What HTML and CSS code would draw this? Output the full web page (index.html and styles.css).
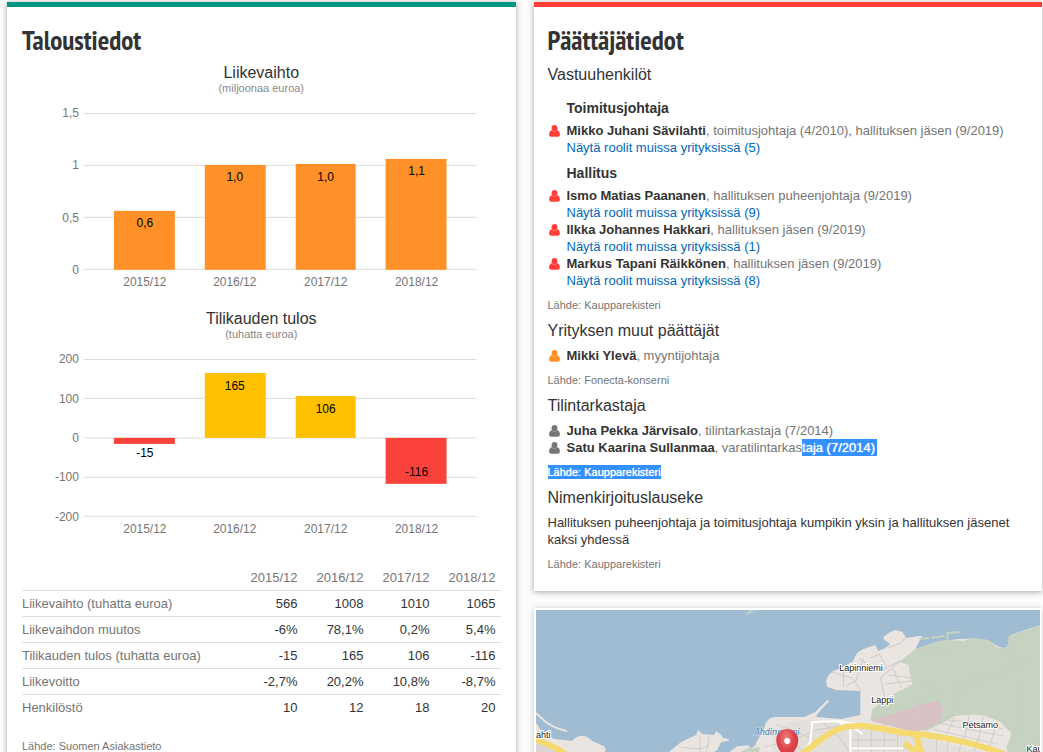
FILE: index.html
```html
<!DOCTYPE html>
<html lang="fi">
<head>
  <meta charset="UTF-8">
  <meta name="viewport" content="width=device-width, initial-scale=1">
  <title>Taloustiedot ja päättäjät</title>
  <link rel="stylesheet" href="styles.css">
</head>
<body>
  <svg class="symbols" aria-hidden="true">
    <symbol id="user" viewBox="0 0 11 12">
      <ellipse cx="5.5" cy="3.2" rx="2.9" ry="3.2"/>
      <path d="M2.6 5.3C0.9 5.7 0.1 7.2 0.1 9.6C0.1 10.9 0.9 11.7 2.1 11.7H8.9C10.1 11.7 10.9 10.9 10.9 9.6C10.9 7.2 10.1 5.7 8.4 5.3C7.5 6.2 6.5 6.6 5.5 6.6C4.5 6.6 3.5 6.2 2.6 5.3Z"/>
    </symbol>
  </svg>

  <main class="columns">
    <section class="card card-finance">
      <h2>Taloustiedot</h2>

      <div class="chart">
        <h3 class="chart-title">Liikevaihto</h3>
        <p class="chart-unit">(miljoonaa euroa)</p>
        <svg viewBox="0 0 479 196" role="img" aria-label="Liikevaihto">
          <path class="grid" d="M62 19.5H455M62 71.5H455M62 123.5H455M62 175.5H455"/>
          <g class="axis">
            <text x="57" y="23">1,5</text>
            <text x="57" y="75">1</text>
            <text x="57" y="128">0,5</text>
            <text x="57" y="180">0</text>
          </g>
          <g class="bars-revenue">
            <rect x="92" y="117" width="61" height="59"/>
            <rect x="183" y="71" width="61" height="105"/>
            <rect x="274" y="70" width="60" height="106"/>
            <rect x="364" y="65" width="61" height="111"/>
          </g>
          <g class="values">
            <text x="123" y="133">0,6</text>
            <text x="213" y="87">1,0</text>
            <text x="304" y="87">1,0</text>
            <text x="395" y="81">1,1</text>
          </g>
          <g class="years">
            <text x="123" y="192">2015/12</text>
            <text x="213" y="192">2016/12</text>
            <text x="304" y="192">2017/12</text>
            <text x="395" y="192">2018/12</text>
          </g>
        </svg>
      </div>

      <div class="chart">
        <h3 class="chart-title">Tilikauden tulos</h3>
        <p class="chart-unit">(tuhatta euroa)</p>
        <svg viewBox="0 0 479 205" role="img" aria-label="Tilikauden tulos">
          <path class="grid" d="M62 19.5H455M62 58.5H455M62 98H455M62 137.5H455M62 176.5H455"/>
          <g class="axis">
            <text x="57" y="23">200</text>
            <text x="57" y="63">100</text>
            <text x="57" y="102">0</text>
            <text x="57" y="141">-100</text>
            <text x="57" y="181">-200</text>
          </g>
          <g class="bars-profit">
            <rect x="183" y="33" width="61" height="65"/>
            <rect x="274" y="56" width="60" height="42"/>
          </g>
          <g class="bars-loss">
            <rect x="92" y="98" width="61" height="6"/>
            <rect x="364" y="98" width="61" height="46"/>
          </g>
          <g class="values">
            <text x="123" y="117">-15</text>
            <text x="213" y="50">165</text>
            <text x="304" y="73">106</text>
            <text x="395" y="136">-116</text>
          </g>
          <g class="years">
            <text x="123" y="193">2015/12</text>
            <text x="213" y="193">2016/12</text>
            <text x="304" y="193">2017/12</text>
            <text x="395" y="193">2018/12</text>
          </g>
        </svg>
      </div>

      <table class="figures">
        <thead>
          <tr><td></td><th scope="col">2015/12</th><th scope="col">2016/12</th><th scope="col">2017/12</th><th scope="col">2018/12</th></tr>
        </thead>
        <tbody>
          <tr><th scope="row">Liikevaihto (tuhatta euroa)</th><td>566</td><td>1008</td><td>1010</td><td>1065</td></tr>
          <tr><th scope="row">Liikevaihdon muutos</th><td>-6%</td><td>78,1%</td><td>0,2%</td><td>5,4%</td></tr>
          <tr><th scope="row">Tilikauden tulos (tuhatta euroa)</th><td>-15</td><td>165</td><td>106</td><td>-116</td></tr>
          <tr><th scope="row">Liikevoitto</th><td>-2,7%</td><td>20,2%</td><td>10,8%</td><td>-8,7%</td></tr>
          <tr><th scope="row">Henkilöstö</th><td>10</td><td>12</td><td>18</td><td>20</td></tr>
        </tbody>
      </table>
      <p class="source source-table">Lähde: Suomen Asiakastieto</p>
    </section>

    <div class="side">
      <section class="card card-people">
        <h2>Päättäjätiedot</h2>

        <h3>Vastuuhenkilöt</h3>
        <div class="roles">
          <h4>Toimitusjohtaja</h4>
          <ul class="people red">
            <li><svg class="icon"><use href="#user"/></svg><div><strong>Mikko Juhani Sävilahti</strong>, toimitusjohtaja (4/2010), hallituksen jäsen (9/2019)<br><a href="#">Näytä roolit muissa yrityksissä (5)</a></div></li>
          </ul>
          <h4>Hallitus</h4>
          <ul class="people red">
            <li><svg class="icon"><use href="#user"/></svg><div><strong>Ismo Matias Paananen</strong>, hallituksen puheenjohtaja (9/2019)<br><a href="#">Näytä roolit muissa yrityksissä (9)</a></div></li>
            <li><svg class="icon"><use href="#user"/></svg><div><strong>Ilkka Johannes Hakkari</strong>, hallituksen jäsen (9/2019)<br><a href="#">Näytä roolit muissa yrityksissä (1)</a></div></li>
            <li><svg class="icon"><use href="#user"/></svg><div><strong>Markus Tapani Räikkönen</strong>, hallituksen jäsen (9/2019)<br><a href="#">Näytä roolit muissa yrityksissä (8)</a></div></li>
          </ul>
        </div>
        <p class="source">Lähde: Kaupparekisteri</p>

        <h3>Yrityksen muut päättäjät</h3>
        <ul class="people orange">
          <li><svg class="icon"><use href="#user"/></svg><div><strong>Mikki Ylevä</strong>, myyntijohtaja</div></li>
        </ul>
        <p class="source">Lähde: Fonecta-konserni</p>

        <h3>Tilintarkastaja</h3>
        <ul class="people gray">
          <li><svg class="icon"><use href="#user"/></svg><div><strong>Juha Pekka Järvisalo</strong>, tilintarkastaja (7/2014)</div></li>
          <li><svg class="icon"><use href="#user"/></svg><div><strong>Satu Kaarina Sullanmaa</strong>, varatilintarkas<span class="selected selected-end">taja (7/2014)</span></div></li>
        </ul>
        <p class="source"><span class="selected">Lähde: Kaupparekisteri</span></p>

        <h3>Nimenkirjoituslauseke</h3>
        <p class="clause">Hallituksen puheenjohtaja ja toimitusjohtaja kumpikin yksin ja hallituksen jäsenet kaksi yhdessä</p>
        <p class="source">Lähde: Kaupparekisteri</p>
      </section>

      <section class="map">
        <svg viewBox="0 0 504 200" role="img" aria-label="Kartta">
          <defs>
            <radialGradient id="pin" cx="0.45" cy="0.25" r="0.7">
              <stop offset="0" stop-color="#f08080"/>
              <stop offset="0.5" stop-color="#dd4449"/>
              <stop offset="1" stop-color="#cf3338"/>
            </radialGradient>
          </defs>
          <rect width="504" height="200" fill="#a0bcd2"/>
          <path d="M209 5L214 0H217L213 4ZM216 3L219 0L220 1Z" fill="#c6d6c6"/>

          <!-- western shore -->
          <path d="M0 103C8 110 13 117 31 121" fill="none" stroke="#eae5e1" stroke-width="2"/>
          <path d="M0 113L6 122L18 129L36 131C42 124 50 124 56 131L68 136Q71 139 68 143L72 152V200H0Z" fill="#eae5e1"/>
          <path d="M0 128L10 133L38 145V200H0Z" fill="#d9d6d3"/>
          <path d="M0 129L20 138L42 152" fill="none" stroke="#f5d96d" stroke-width="6"/>

          <!-- southern shore and the peninsula -->
          <path d="M130 144L145 132L160 125L162 120L166 124L178 125L180 121L185 125L187 128L193 129L192 131L185 132L181 140L174 143L190 152V200H120V150Z" fill="#eae5e1"/>
          <path d="M190 144L201 136L212 135L215 138L219 135L222 129L228 118Q230 108 238 107L268 107L279 102L291 90L293 91L281 104L280 107L305 109L324 105V81L300 80L291 77Q287 68 297 61L307 57L317 51Q319 41 330 38L339 35L342 41L349 38L354 34L348 30L347 27L354 22L359 20L366 22L370 28L382 26L386 26L382 33L379 39C392 34 412 27 444 29C455 29 461 39 470 38C475 34 469 27 477 24L492 19L504 15V200H180Z" fill="#eae5e1"/>
          <path d="M379 39L402 31L412 30L428 31L434 28C448 29 451 29 457 33L461 39L470 37L473 31L471 27L481 23L491 20L504 15V200H486L470 137L475 124L464 112C447 104 430 103 418 107L390 121L334 110L336 99L359 83L376 75L372 55L363 52Z" fill="#c6d3c1"/>
          <path d="M411 30V23M410 23L424 22M395 28L408 26M383 29L393 28" fill="none" stroke="#c6d3c1" stroke-width="2"/>
          <path d="M334 111L358 103L373 99L382 94L402 91L407 99L404 111L390 119L378 122Z" fill="#d8c1c5"/>
          <path d="M203 143L211 138L224 137L222 144Z" fill="#c6d3c1"/>
          <path d="M418 106L447 105L462 112L475 123L466 135L450 143V200H370V136Z" fill="#eae5e1"/>
          <path d="M239 124L251 112L272 110L300 113L330 117L395 130L460 145V200H224Z" fill="#e3dfdb"/>
          <path d="M502 132L504 130V138H502Z" fill="#d8c1c5"/>

          <!-- paths and minor streets -->
          <g class="minor">
            <path d="M379 38L400 43L418 37M422 96C421 80 430 69 456 66L472 57L491 49M461 37L474 46V57M434 69L446 76M422 82L416 70V67M370 76L392 75Q402 79 404 90M364 51L343 61L323 49M334 48L343 44L350 56M364 51L344 68L348 86M353 65L376 68M357 59L365 78M349 74L375 71M295 62L316 68L324 80M307 58V77M327 48L320 70L310 76M352 38L364 33L369 28M482 77L485 102L480 126L475 133M418 107L410 124M433 104L427 133M447 105L440 138M461 112L452 139M402 113L440 121L468 126M396 119L435 128L462 134M410 110L445 113L467 119M379 117L384 99M346 116L365 111L384 105"/>
            <path d="M164 125V145M173 126L170 145M145 137L164 139L173 135M133 145L155 144M239 114L254 119L280 131M244 123L269 142M228 137L263 127L282 119M286 112L305 129L314 143M280 120L303 116M322 122V144M335 119V144M348 121V145M361 124V143M313 130H360M320 137H377M400 129V144M412 132L410 145M425 130L422 145M440 131L437 145"/>
          </g>

          <!-- white streets -->
          <path d="M274 134L276 112L302 111L314 113L335 116L370 124M275 137L256 155M314 112V200M312 113L326 124M314 138H367M274 132L265 145M302 111L311 118L322 117" fill="none" stroke="#fff" stroke-width="2"/>

          <!-- main roads -->
          <g fill="none" stroke="#f5da70" stroke-width="6">
            <path d="M257 151C280 133 292 122 305 118C327 111 349 121 371 123C404 126 437 132 470 145L498 156"/>
            <path d="M379 122L383 137L390 155M368 133L389 149"/>
          </g>

          <g class="place">
            <text x="303" y="61">Lapinniemi</text>
            <text x="335" y="93">Lappi</text>
            <text x="426" y="118">Petsamo</text>
            <text x="490" y="142">Kau</text>
            <text x="0" y="128">ahti</text>
          </g>
          <text class="water" x="218" y="125">Ahdinnonni</text>

          <path d="M251 154C249 145 240 140 240 130A10.5 10.5 0 0 1 262 130C262 140 253 145 251 154Z" fill="url(#pin)"/>
          <circle cx="251" cy="131" r="3" fill="#fff"/>
        </svg>
      </section>
    </div>
  </main>
</body>
</html>
```
FILE: styles.css
```css
* {
  box-sizing: border-box;
}

body {
  margin: 0;
  background: #fcfcfc;
  color: #333;
  font-family: Arial, "Liberation Sans", sans-serif;
  font-size: 13px;
  line-height: 17px;
}

h2, h3, h4, p, ul {
  margin: 0;
  padding: 0;
}

.symbols {
  display: none;
}

.columns {
  display: grid;
  grid-template-columns: 1fr 1fr;
  gap: 18px;
  padding: 2px 1px 18px 7px;
}

.side {
  display: flex;
  flex-direction: column;
  gap: 17px;
}

.card {
  padding: 15px 15px 18px 14px;
  background: #fff;
  border-top: 5px solid;
  box-shadow: 0 1px 6px rgba(0, 0, 0, 0.35);
}

.card-finance {
  padding-left: 15px;
  border-color: #009681;
}

.card-people {
  border-color: #ff3f38;
}

h2 {
  font-family: "PT Sans Narrow", "Liberation Sans Narrow", "Open Sans", sans-serif;
  font-size: 27px;
  line-height: 36px;
  font-weight: bold;
}

h3 {
  margin: 6px 0 5px;
  font-size: 16px;
  line-height: 22px;
  font-weight: normal;
}

h4 {
  margin: 8px 0 5px 19px;
  font-size: 14px;
  line-height: 18px;
}

.roles h4:first-child {
  margin-top: 0;
  padding-top: 8px;
}

/* charts */
.chart {
  padding-top: 4px;
}

.chart + .chart {
  padding-top: 18px;
}

.chart-title,
.chart-unit {
  margin: 0;
  line-height: 21px;
  text-align: center;
}

.chart-unit {
  color: #888;
  font-size: 11px;
  line-height: 11px;
}

.chart svg {
  display: block;
  width: 100%;
}

.chart text {
  font-size: 12px;
}

.grid {
  stroke: #ddd;
}

.axis,
.years {
  fill: #757575;
}

.axis {
  text-anchor: end;
}

.values,
.years {
  text-anchor: middle;
}

.values {
  fill: #000;
}

.bars-revenue {
  fill: #ff9128;
}

.bars-profit {
  fill: #ffc000;
}

.bars-loss {
  fill: #fb423a;
}

/* key figures */
.figures {
  width: 100%;
  margin-top: 20px;
  border-collapse: collapse;
  table-layout: fixed;
}

.figures th,
.figures td {
  width: 66px;
  height: 26px;
  padding: 0 5px 0 0;
  text-align: right;
  font-weight: normal;
}

.figures th {
  color: #757575;
}

.figures th[scope="row"],
.figures thead td {
  width: auto;
  text-align: left;
}

.figures tbody tr {
  border-top: 1px solid #ddd;
}

/* people */
.people {
  color: #757575;
  list-style: none;
}

.people li {
  display: flex;
  gap: 7px;
}

.people li > div {
  flex: 1;
}

.people strong {
  color: #333;
}

.people a {
  color: #0067b9;
  text-decoration: none;
}

.icon {
  flex: none;
  width: 11px;
  height: 12px;
  margin: 3px 0 0 1px;
}

.red .icon {
  fill: #ff3f38;
}

.orange .icon {
  fill: #ff9128;
}

.gray .icon {
  fill: #757575;
}

.source {
  margin-top: 8px;
  color: #757575;
  font-size: 11px;
}

.source-table {
  margin-top: 17px;
}

.selected {
  padding: 1px 0;
  background: #3390ff;
  color: #fff;
  text-shadow: 0 0 1px #fff;
}

.selected-end {
  padding-right: 2px;
}

/* map */
.map {
  padding: 2px;
  background: #fff;
  box-shadow: 0 1px 6px rgba(0, 0, 0, 0.25);
}

.map svg {
  display: block;
  width: 100%;
}

.minor {
  fill: none;
  stroke: #d0ccc7;
}

.place text {
  font-family: "Liberation Sans", sans-serif;
  font-size: 9px;
  fill: #222;
  stroke: #fff;
  stroke-width: 2px;
  paint-order: stroke;
}

.water {
  font-family: "DejaVu Sans", sans-serif;
  font-size: 8px;
  font-style: italic;
  fill: #4480b4;
  stroke: #dfe9ef;
  stroke-width: 1px;
  paint-order: stroke;
}
```
